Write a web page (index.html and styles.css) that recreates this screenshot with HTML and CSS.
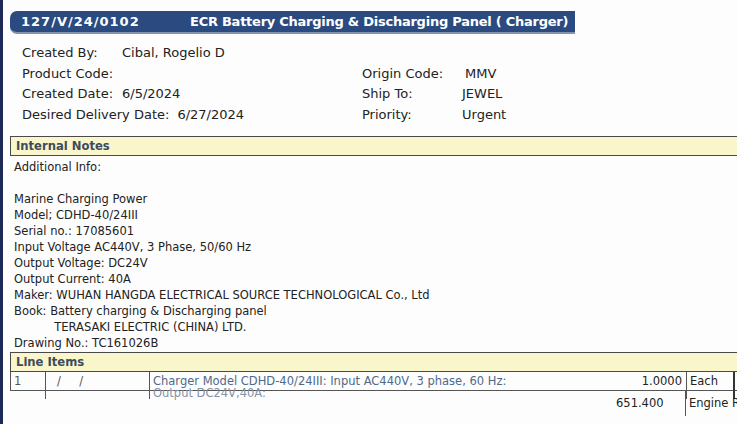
FILE: index.html
```html
<!DOCTYPE html>
<html lang="en">
<head>
  <meta charset="UTF-8" />
  <title>Requisition 127/V/24/0102</title>
  <link rel="stylesheet" href="styles.css">
</head>
<body>

<div class="page">
  <div class="title-bar">
    <span class="req-no">127/V/24/0102</span>
    <span class="req-title">ECR Battery Charging &amp; Discharging Panel ( Charger)</span>
  </div>

  <div class="fields">
    <div class="field"><span class="label">Created By:</span>Cibal, Rogelio D</div>
    <div class="field"></div>
    <div class="field"><span class="label">Product Code:</span></div>
    <div class="field"><span class="label">Origin Code:</span><span class="origin">MMV</span></div>
    <div class="field"><span class="label">Created Date:</span>6/5/2024</div>
    <div class="field"><span class="label">Ship To:</span>JEWEL</div>
    <div class="field"><span class="label">Desired Delivery Date:</span>6/27/2024</div>
    <div class="field"><span class="label">Priority:</span>Urgent</div>
  </div>

  <div class="section-head">Internal Notes</div>
  <div class="notes">Additional Info:

Marine Charging Power
Model; CDHD-40/24III
Serial no.: 17085601
Input Voltage AC440V, 3 Phase, 50/60 Hz
Output Voltage: DC24V
Output Current: 40A
Maker: WUHAN HANGDA ELECTRICAL SOURCE TECHNOLOGICAL Co., Ltd
Book: Battery charging &amp; Discharging panel
           TERASAKI ELECTRIC (CHINA) LTD.
Drawing No.: TC161026B</div>

  <div class="section-head">Line Items</div>
  <div class="item-row">
    <div class="cell c-line">1</div>
    <div class="cell c-ref">/&nbsp;&nbsp;&nbsp;&nbsp;&nbsp;/</div>
    <div class="cell c-desc">Charger Model CDHD-40/24III: Input AC440V, 3 phase, 60 Hz:<br><span class="wrap">Output DC24V,40A:</span></div>
    <div class="cell c-qty">1.0000</div>
    <div class="cell c-unit">Each</div>
    <div class="cell c-end"></div>
  </div>
  <div class="item-row sub">
    <div class="cell c-line"></div>
    <div class="cell c-ref"></div>
    <div class="cell c-desc"></div>
    <div class="cell c-qty">651.400</div>
    <div class="cell c-unit">Engine R</div>
  </div>
</div>

</body>
</html>
```

FILE: styles.css
```css
html, body {
  margin: 0;
  padding: 0;
  overflow: hidden;
}
body {
  font-family: "DejaVu Sans", Verdana, sans-serif;
  color: #222;
  background-color: #fdfdfd;
  border-left: 3px solid #1d2a58;
  min-height: 100vh;
  box-sizing: border-box;
}
.page {
  width: 800px;
  padding: 11px 0 0 7px;
}
.title-bar {
  width: 565px;
  height: 21px;
  background-color: #2a4a80;
  border-bottom: 2px solid #8393b3;
  border-radius: 7px 0 0 7px;
  color: white;
  font-weight: bold;
  font-size: 13px;
  line-height: 21px;
  display: flex;
  white-space: nowrap;
}
.req-no {
  flex: none;
  width: 169px;
  padding-left: 11px;
  letter-spacing: 1px;
}
.req-title {
  letter-spacing: -0.25px;
}
.fields {
  display: grid;
  grid-template-columns: 340px auto;
  padding: 9px 0 0 12px;
  margin-bottom: 11px;
  font-size: 13px;
  line-height: 20.5px;
}
.label {
  display: inline-block;
  min-width: 92px;
  padding-right: 8px;
}
.origin {
  padding-left: 3px;
}
.section-head {
  background-color: #faf6cb;
  border: 1px solid #4a4a4a;
  border-right: none;
  height: 18px;
  line-height: 18px;
  padding-left: 5px;
  font-size: 11.6px;
  font-weight: bold;
  color: #3d4c5c;
}
.notes {
  white-space: pre;
  font-size: 11.5px;
  line-height: 16px;
  padding: 3px 0 0 4px;
  height: 193px;
  overflow: hidden;
}
.item-row {
  display: grid;
  grid-template-columns: 35px 104px 464px 72px 47px auto;
  height: 18px;
  border-left: 1px solid #555;
  border-bottom: 1px solid #555;
  font-size: 11.5px;
  line-height: 18px;
}
.cell {
  white-space: nowrap;
  padding-left: 3px;
}
.c-line, .c-ref {
  border-right: 1px solid #555;
  color: #555;
}
.c-ref {
  padding-left: 11px;
}
.c-desc {
  color: #4e6a89;
  line-height: 12px;
  padding-top: 3px;
}
.wrap {
  color: #8494a6;
}
.c-qty {
  text-align: right;
  padding-right: 4px;
}
.c-unit {
  border-left: 1px solid #555;
}
.c-end {
  border-left: 2px solid #333;
}
.item-row.sub {
  border-left: none;
  border-bottom: none;
  height: 25px;
  line-height: 25px;
}
.item-row.sub .c-line, .item-row.sub .c-ref {
  border-right: none;
}
.item-row.sub .c-qty {
  padding-right: 23px;
}
```
